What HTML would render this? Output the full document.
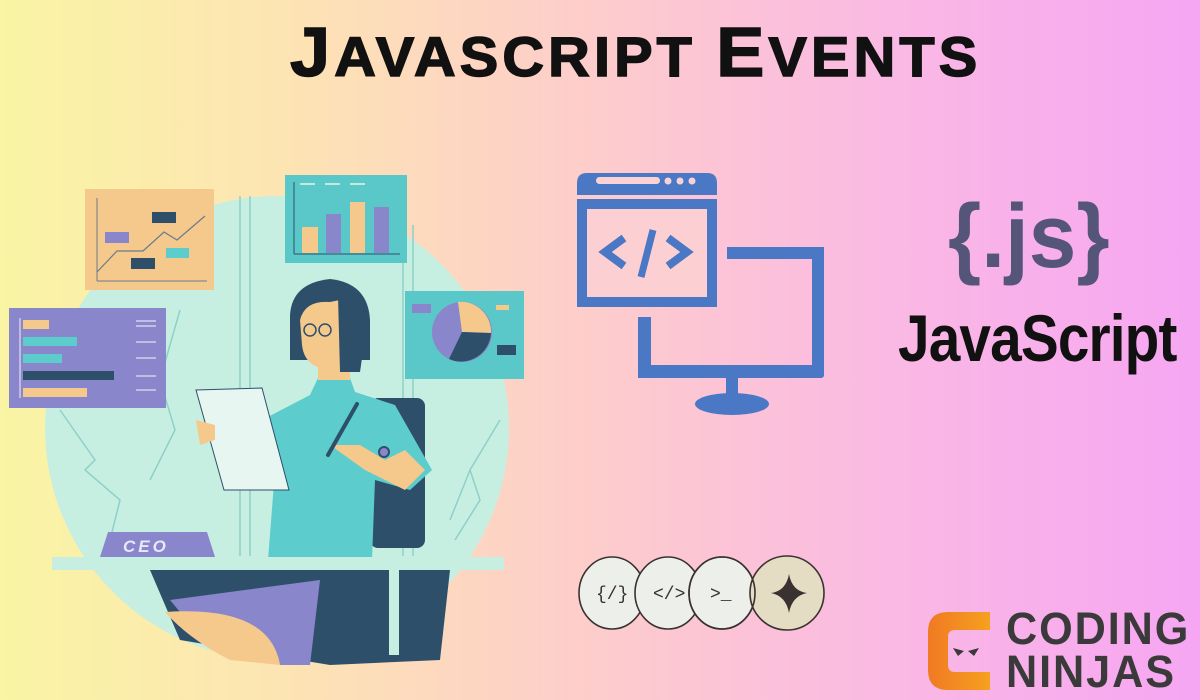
<!DOCTYPE html>
<html><head><meta charset="utf-8"><style>
html,body{margin:0;padding:0}
body{width:1200px;height:700px;overflow:hidden;position:relative;background:linear-gradient(90deg,#f9f5a4 0%,#fde3b4 25%,#fdcccc 50%,#fab8e4 75%,#f6a6f2 100%);font-family:"Liberation Sans",sans-serif}
.t{position:absolute;white-space:nowrap;transform-origin:0 0}
</style></head><body>
<div class="t" style="left:290px;top:12px;font-size:56px;font-weight:bold;color:#111;letter-spacing:4px;transform:scaleX(1.03);-webkit-text-stroke:1.5px #111"><span style="font-size:70px">J</span>AVASCRIPT <span style="font-size:70px">E</span>VENTS</div>
<div class="t" style="left:948px;top:186px;font-size:90px;font-weight:bold;color:#55557a;transform:scaleX(0.95)">{.js}</div>
<div class="t" style="left:898px;top:300px;font-size:66px;font-weight:bold;color:#111;transform:scaleX(0.86);letter-spacing:-1px">JavaScript</div>

<svg width="1200" height="700" style="position:absolute;left:0;top:0">
<circle cx="277" cy="428" r="232" fill="#c6efe2"/>
<g stroke="#8fd0c8" stroke-width="1.5" fill="none">
<line x1="240" y1="196" x2="240" y2="556"/><line x1="250" y1="196" x2="250" y2="556"/>
<line x1="403" y1="225" x2="403" y2="556"/><line x1="413" y1="225" x2="413" y2="556"/>
<path d="M60 410 L95 460 L85 470 L120 500 L110 540"/><path d="M180 310 L160 380 L175 430 L150 480"/>
<path d="M500 420 L470 470 L480 500 L455 540"/><path d="M470 470 L450 520"/>
</g>
<rect x="85" y="189" width="129" height="101" fill="#f5c98c"/>
<polyline points="97,272 117,251 143,251 164,232 177,240 205,216" fill="none" stroke="#6a7a8a" stroke-width="1.2"/>
<line x1="97" y1="198" x2="97" y2="281" stroke="#6a7a8a"/><line x1="97" y1="281" x2="207" y2="281" stroke="#6a7a8a"/>
<rect x="105" y="232" width="24" height="11" fill="#8a86cc"/>
<rect x="152" y="212" width="24" height="11" fill="#2d4f6a"/>
<rect x="131" y="258" width="24" height="11" fill="#2d4f6a"/>
<rect x="166" y="248" width="23" height="10" fill="#5ccccc"/>
<rect x="285" y="175" width="122" height="88" fill="#5ac8c8"/>
<rect x="302" y="227" width="16" height="26" fill="#f5c98c"/>
<rect x="326" y="214" width="15" height="39" fill="#8a86cc"/>
<rect x="350" y="202" width="15" height="51" fill="#f5c98c"/>
<rect x="374" y="207" width="15" height="46" fill="#8a86cc"/>
<line x1="294" y1="182" x2="294" y2="254" stroke="#2d4f6a"/><line x1="294" y1="254" x2="400" y2="254" stroke="#2d4f6a"/>
<g stroke="#e8f4e0" stroke-width="1.5"><line x1="300" y1="184" x2="315" y2="184"/><line x1="325" y1="184" x2="340" y2="184"/><line x1="350" y1="184" x2="365" y2="184"/></g>
<rect x="9" y="308" width="157" height="100" fill="#8a86cc"/>
<line x1="20" y1="318" x2="20" y2="398" stroke="#f0f0f0"/>
<rect x="23" y="320" width="26" height="9" fill="#f5c98c"/>
<rect x="23" y="337" width="54" height="9" fill="#5ccccc"/>
<rect x="23" y="354" width="39" height="9" fill="#5ccccc"/>
<rect x="23" y="371" width="91" height="9" fill="#2d4f6a"/>
<rect x="23" y="388" width="64" height="9" fill="#f5c98c"/>
<g stroke="#e0e0f0" stroke-width="1.2"><line x1="136" y1="321" x2="156" y2="321"/><line x1="136" y1="326" x2="156" y2="326"/><line x1="136" y1="342" x2="156" y2="342"/><line x1="136" y1="358" x2="156" y2="358"/><line x1="136" y1="376" x2="156" y2="376"/><line x1="136" y1="390" x2="156" y2="390"/></g>
<rect x="405" y="291" width="119" height="88" fill="#5ac8c8"/>
<circle cx="462" cy="332" r="30" fill="#8a86cc"/>
<path d="M462 332 L458 302 A30 30 0 0 1 491 333 Z" fill="#f5c98c"/>
<path d="M462 332 L491 333 A30 30 0 0 1 449 359 Z" fill="#2d4f6a"/>
<rect x="412" y="304" width="19" height="9" fill="#8a86cc"/>
<rect x="496" y="305" width="13" height="5" fill="#f5c98c"/>
<rect x="497" y="345" width="19" height="10" fill="#2d4f6a"/>
<rect x="370" y="398" width="55" height="150" rx="8" fill="#2d4f6a"/>
<path d="M318 378 L350 378 L355 392 L395 405 L432 470 L410 490 L375 480 L372 560 L268 560 L275 470 L230 460 L262 420 L310 395 Z" fill="#5ccccc"/>
<rect x="318" y="355" width="32" height="25" fill="#f5c98c"/>
<path d="M290 360 L290 315 Q292 283 330 279 Q368 283 370 320 L370 360 Z" fill="#2d4f6a"/>
<path d="M300 320 Q305 300 330 302 L340 300 L340 370 Q305 372 302 345 Z" fill="#f5c98c"/>
<path d="M338 296 Q365 300 366 330 L360 372 L340 372 Z" fill="#2d4f6a"/>
<circle cx="310" cy="330" r="6" fill="none" stroke="#2d4f6a" stroke-width="1.5"/><circle cx="325" cy="330" r="6" fill="none" stroke="#2d4f6a" stroke-width="1.5"/>
<path d="M330 445 L360 445 L385 460 L405 450 L425 470 L405 490 L365 470 Z" fill="#f5c98c"/>
<circle cx="384" cy="452" r="5" fill="#8a86cc" stroke="#2d4f6a" stroke-width="2"/>
<line x1="328" y1="455" x2="357" y2="404" stroke="#2d4f6a" stroke-width="4" stroke-linecap="round"/>
<path d="M196 390 L262 388 L289 490 L224 490 Z" fill="#e8f6f2" stroke="#2d4f6a" stroke-width="1"/>
<path d="M196 420 L215 425 L215 440 L200 445 Z" fill="#f5c98c"/>
<rect x="52" y="557" width="452" height="13" fill="#c6efe2"/>
<path d="M100 557 L108 532 L207 532 L215 557 Z" fill="#8a86cc"/>
<text x="123" y="552" font-family="Liberation Sans" font-weight="bold" font-style="italic" font-size="17" letter-spacing="3" fill="#e8e8f8">CEO</text>
<path d="M150 570 L450 570 L440 660 L330 665 L180 640 Z" fill="#2d4f6a"/>
<path d="M170 600 L320 580 L310 665 L280 665 Q270 610 180 612 Z" fill="#8a86cc"/>
<path d="M165 612 Q270 605 280 665 L230 660 Q190 640 165 612 Z" fill="#f5c98c"/>
<rect x="389" y="570" width="10" height="85" fill="#c6efe2"/>

<g fill="#4a78c4">
<path d="M577 183 Q577 173 587 173 L707 173 Q717 173 717 183 L717 195 L577 195 Z"/>
<rect x="577" y="199" width="140" height="108"/>
<rect x="727" y="247" width="97" height="12"/>
<rect x="812" y="247" width="12" height="131" rx="3"/>
<rect x="638" y="317" width="13" height="61"/>
<rect x="638" y="365" width="186" height="13" rx="3"/>
<rect x="726" y="376" width="12" height="20"/>
<ellipse cx="732" cy="404" rx="37" ry="11"/>
</g>
<rect x="587" y="209" width="120" height="88" fill="#fccfd2"/>
<rect x="596" y="177" width="64" height="7" rx="3.5" fill="#fbd2d4"/>
<circle cx="668" cy="181" r="3.5" fill="#fbd2d4"/><circle cx="680" cy="181" r="3.5" fill="#fbd2d4"/><circle cx="692" cy="181" r="3.5" fill="#fbd2d4"/>
<g stroke="#4a78c4" stroke-width="8" fill="none">
<polyline points="624,238 605,252 624,266"/>
<polyline points="668,238 687,252 668,266"/>
<line x1="653" y1="230" x2="641" y2="277" stroke-width="7"/>
</g>

<g stroke="#3a3230" stroke-width="1.6">
<ellipse cx="612" cy="593" rx="33" ry="36" fill="#edf0ea"/>
<ellipse cx="668" cy="593" rx="33" ry="36" fill="#edf0ea"/>
<ellipse cx="722" cy="593" rx="33" ry="36" fill="#edf0ea"/>
<ellipse cx="787" cy="593" rx="37" ry="37" fill="#e5dcc4"/>
<ellipse cx="722" cy="593" rx="33" ry="36" fill="none"/>
</g>
<g font-family="Liberation Mono" font-size="18" fill="#3a3230">
<text x="596" y="599">{/}</text><text x="653" y="599">&lt;/&gt;</text><text x="710" y="599">&gt;_</text>
</g>
<path d="M789 574 Q792 591 807 593 Q792 596 789 613 Q786 596 771 593 Q786 591 789 574 Z" fill="#3a3230"/>

<defs><linearGradient id="og" x1="0" x2="1"><stop offset="0" stop-color="#f07a22"/><stop offset="1" stop-color="#f6a020"/></linearGradient></defs>
<path d="M948 612 L990 612 L990 630 L955 630 Q948 630 948 637 L948 665 Q948 672 955 672 L990 672 L990 690 L948 690 Q928 690 928 670 L928 632 Q928 612 948 612 Z" fill="url(#og)"/>
<path d="M953 648 L964 651 L958 656 Z" fill="#3a3a3a"/><path d="M979 648 L968 651 L974 656 Z" fill="#3a3a3a"/>
</svg>
<div class="t" style="left:1006px;top:607px;font-size:45px;font-weight:bold;color:#3a3a3a;transform:scaleX(0.96);letter-spacing:2px;line-height:43px">CODING<br>NINJAS</div>
</body></html>
